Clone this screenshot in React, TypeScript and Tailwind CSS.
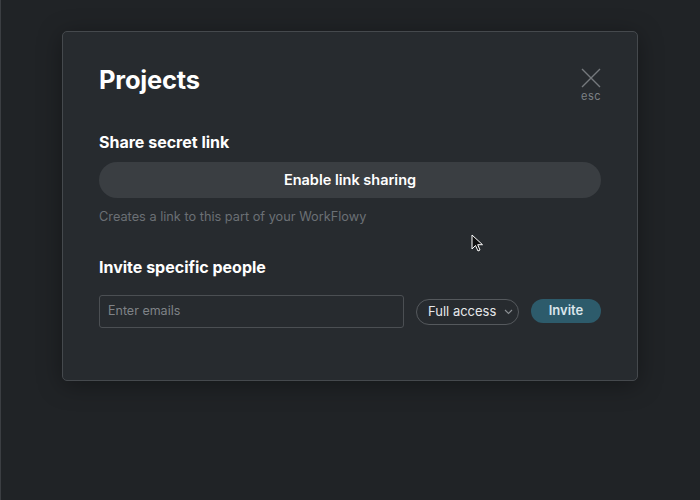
import React from "react";

export default function App() {
  return (
    <div
      className="relative w-[700px] h-[500px] bg-[#202326] border-l border-[#3b3e42] overflow-hidden"
      style={{ fontFamily: "Inter, 'Noto Sans', sans-serif" }}
    >
      <div className="ml-[61px] mt-[31px] w-[576px] h-[350px] bg-[#272b2f] border border-[#45494d] rounded-[5px] shadow-[0_4px_24px_rgba(0,0,0,0.35)] px-[36px] pt-[30px]">
        <div className="flex justify-between items-start">
          <h1 className="text-[25.5px] leading-[36px] font-bold text-white tracking-[-0.2px]">Projects</h1>
          <div className="flex flex-col items-center mt-[6px] mr-[0px] text-[#7d8185]">
            <svg width="20" height="20" viewBox="0 0 20 20" fill="none" stroke="#75797d" strokeWidth="1.4">
              <path d="M1 1 L19 19 M19 1 L1 19" />
            </svg>
            <span className="text-[11px] leading-[14px] mt-[1px] tracking-[0.5px]">esc</span>
          </div>
        </div>
        <h2 className="mt-[29px] text-[16px] leading-[20px] font-bold text-white">Share secret link</h2>
        <button className="mt-[10px] w-full h-[36px] rounded-full bg-[#3a3e42] text-[14.5px] font-semibold text-white">
          Enable link sharing
        </button>
        <p className="mt-[11px] text-[12.75px] leading-[16px] text-[#6b7075]">
          Creates a link to this part of your WorkFlowy
        </p>
        <h2 className="mt-[32px] text-[16px] leading-[20px] font-bold text-white">Invite specific people</h2>
        <div className="mt-[18px] flex items-center">
          <div className="w-[305px] h-[33px] border border-[#4b4f53] rounded-[3px] flex items-center pl-[8px] text-[12.5px] text-[#7f8387]">
            Enter emails
          </div>
          <div className="ml-[12px] w-[103px] h-[26px] border border-[#55595d] rounded-full flex items-center pl-[11px] text-[13px] text-[#e6e8ea]">
            Full access
            <svg className="ml-[8px]" width="9" height="6" viewBox="0 0 9 6" fill="none" stroke="#8b8f93" strokeWidth="1.1">
              <path d="M1 1 L4.5 4.5 L8 1" />
            </svg>
          </div>
          <button className="ml-[12px] mt-[-1px] w-[70px] h-[24px] rounded-full bg-[#2d5b6b] text-[13px] font-semibold text-[#d9e6eb]">
            Invite
          </button>
        </div>
      </div>
      <svg className="absolute left-[470px] top-[234px]" width="14" height="19" viewBox="0 0 14 19">
        <path d="M1 1 L1 15 L4.5 11.5 L7 17 L9 16 L6.7 10.7 L11.5 10.7 Z" fill="#111" stroke="#fff" strokeWidth="1" />
      </svg>
    </div>
  );
}
